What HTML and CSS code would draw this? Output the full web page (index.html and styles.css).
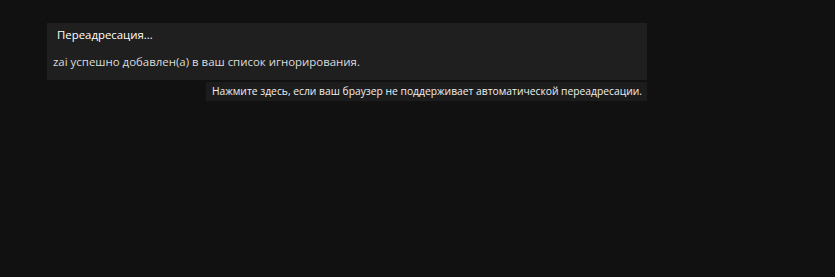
FILE: index.html
```html
<!DOCTYPE html>
<html lang="ru">
<head>
  <meta charset="UTF-8" />
  <title>Переадресация...</title>
  <link rel="stylesheet" href="styles.css">
</head>
<body>
  <div class="wrap">
    <div class="panel">
      <div class="panel-title">Переадресация...</div>
      <div class="panel-body">zai успешно добавлен(а) в ваш список игнорирования.</div>
    </div>
    <div class="redirect">
      <a href="#">Нажмите здесь, если ваш браузер не поддерживает автоматической переадресации.</a>
    </div>
  </div>
</body>
</html>
```

FILE: styles.css
```css
body {
  margin: 0;
  background-color: #111111;
  font-family: 'Open Sans', 'DejaVu Sans', sans-serif;
}
.wrap {
  width: 600px;
  margin-left: 47px;
  padding-top: 23px;
  display: flex;
  flex-direction: column;
  align-items: flex-end;
}
.panel {
  width: 100%;
  background-color: #1f1f1f;
  height: 57px;
}
.panel-title {
  color: #ffffff;
  font-size: 11.4px;
  padding: 3px 10px 0;
  height: 23px;
  line-height: 18px;
}
.panel-body {
  color: #dddddd;
  font-size: 11.45px;
  padding: 4px 6px 0;
  line-height: 18px;
}
.redirect {
  margin-top: 2px;
  background-color: #1c1c1c;
  height: 19px;
  padding: 0 5px 0 6px;
  font-size: 10.3px;
  line-height: 18px;
}
.redirect a {
  color: #f0f0f0;
  text-decoration: none;
}
```
